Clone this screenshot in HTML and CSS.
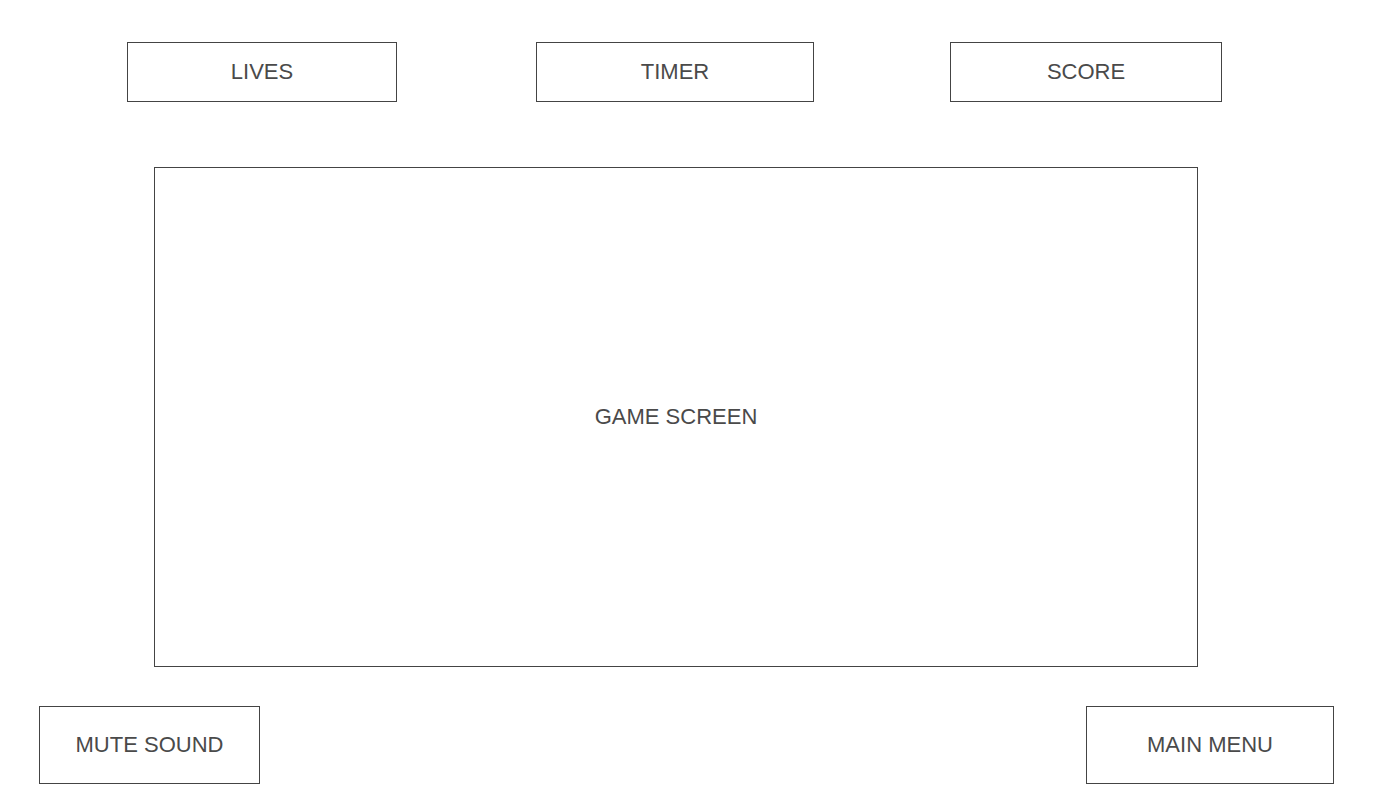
FILE: index.html
```html
<!DOCTYPE html>
<html>
<head>
<meta charset="utf-8">
<link rel="stylesheet" href="styles.css">
</head>
<body>
<div class="page">
  <div class="hud">
    <div class="box lives">LIVES</div>
    <div class="box timer">TIMER</div>
    <div class="box score">SCORE</div>
  </div>
  <div class="game-row">
    <div class="box game">GAME SCREEN</div>
  </div>
  <div class="controls">
    <div class="box mute">MUTE SOUND</div>
    <div class="box menu">MAIN MENU</div>
  </div>
</div>
</body>
</html>
```
FILE: styles.css
```css
html, body {
  margin: 0;
  padding: 0;
  background: #ffffff;
}
.page {
  width: 1379px;
  height: 803px;
  font-family: "Liberation Sans", Arial, sans-serif;
  font-size: 22px;
  color: #4a4a4a;
}
.box {
  box-sizing: border-box;
  border: 1px solid #444444;
  display: flex;
  align-items: center;
  justify-content: center;
  background: #ffffff;
}
.hud {
  display: flex;
  padding: 42px 0 0 127px;
}
.lives { width: 270px; height: 60px; }
.timer { width: 278px; height: 60px; margin-left: 139px; }
.score { width: 272px; height: 60px; margin-left: 136px; }
.game-row {
  display: flex;
  padding: 65px 0 0 154px;
}
.game { width: 1044px; height: 500px; }
.controls {
  display: flex;
  justify-content: space-between;
  padding: 39px 45px 0 39px;
}
.mute { width: 221px; height: 78px; }
.menu { width: 248px; height: 78px; }
```
